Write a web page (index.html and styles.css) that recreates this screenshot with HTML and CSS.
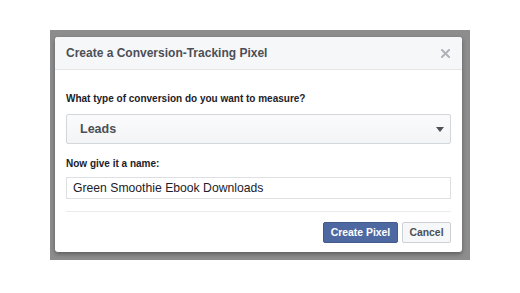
FILE: index.html
```html
<!DOCTYPE html>
<html>
<head>
<meta charset="utf-8">
<link rel="stylesheet" href="styles.css">
</head>
<body>
<div class="backdrop">
  <div class="dialog">
    <div class="dialog-header">
      <span class="dialog-title">Create a Conversion-Tracking Pixel</span>
      <svg class="close" width="9" height="9" viewBox="0 0 9 9"><path d="M1 1L8 8M8 1L1 8" stroke="#b0b3b8" stroke-width="2" stroke-linecap="square"/></svg>
    </div>
    <div class="dialog-body">
      <div class="label">What type of conversion do you want to measure?</div>
      <div class="select">
        <span class="select-value">Leads</span>
        <svg class="caret" width="8" height="5" viewBox="0 0 8 5"><path d="M0 0H8L4 5Z" fill="#4b4f56"/></svg>
      </div>
      <div class="label label-second">Now give it a name:</div>
      <div class="input">Green Smoothie Ebook Downloads</div>
      <div class="separator"></div>
      <div class="footer">
        <button class="btn btn-primary">Create Pixel</button>
        <button class="btn btn-default">Cancel</button>
      </div>
    </div>
  </div>
</div>
</body>
</html>
```

FILE: styles.css
```css
html, body {
  margin: 0;
  padding: 0;
  background: #ffffff;
  font-family: "Liberation Sans", Arial, sans-serif;
}

body {
  padding-top: 30px;
}

.backdrop {
  margin-left: 50px;
  width: 420px;
  height: 230px;
  background: #8d8d8d;
  padding-top: 7px;
  padding-left: 5px;
  box-sizing: border-box;
}

.dialog {
  width: 407px;
  height: 215px;
  background: #ffffff;
  border-radius: 3px;
  box-shadow: 0 2px 4px rgba(0, 0, 0, 0.35);
  overflow: hidden;
}

.dialog-header {
  height: 33px;
  background: #f6f7f9;
  border-bottom: 1px solid #e5e5e5;
  box-sizing: border-box;
  display: flex;
  align-items: center;
  justify-content: space-between;
  padding: 0 12px 0 11px;
}

.dialog-title {
  font-size: 12px;
  font-weight: bold;
  color: #4b4f56;
}

.close {
  display: block;
}

.dialog-body {
  padding: 22px 11px 0 11px;
}

.label {
  font-size: 10px;
  font-weight: bold;
  line-height: 14px;
  color: #1d2129;
}

.select {
  margin-top: 8px;
  height: 30px;
  box-sizing: border-box;
  border: 1px solid #d3d6db;
  border-radius: 2px;
  background: linear-gradient(#fbfbfc, #f3f4f6);
  display: flex;
  align-items: center;
  justify-content: space-between;
  padding: 0 6px 0 13px;
}

.select-value {
  font-size: 12.5px;
  font-weight: bold;
  color: #4b4f56;
}

.caret {
  display: block;
}

.label-second {
  margin-top: 13px;
}

.input {
  margin-top: 6px;
  height: 22px;
  box-sizing: border-box;
  border: 1px solid #dddfe2;
  background: #ffffff;
  font-size: 12.2px;
  line-height: 20px;
  color: #1d2129;
  padding-left: 6px;
}

.separator {
  margin-top: 12px;
  height: 1px;
  background: #e9ebee;
}

.footer {
  margin-top: 10px;
  display: flex;
  justify-content: flex-end;
  gap: 4px;
}

.btn {
  height: 21px;
  box-sizing: border-box;
  border-radius: 2px;
  font-family: "Liberation Sans", Arial, sans-serif;
  font-size: 10.4px;
  font-weight: bold;
  padding: 0;
  margin: 0;
  line-height: 19px;
}

.btn-primary {
  width: 75px;
  background: #4e69a2;
  border: 1px solid #435a8b;
  color: #ffffff;
}

.btn-default {
  width: 49px;
  background: #f6f7f9;
  border: 1px solid #ced0d4;
  color: #4b4f56;
}
```
